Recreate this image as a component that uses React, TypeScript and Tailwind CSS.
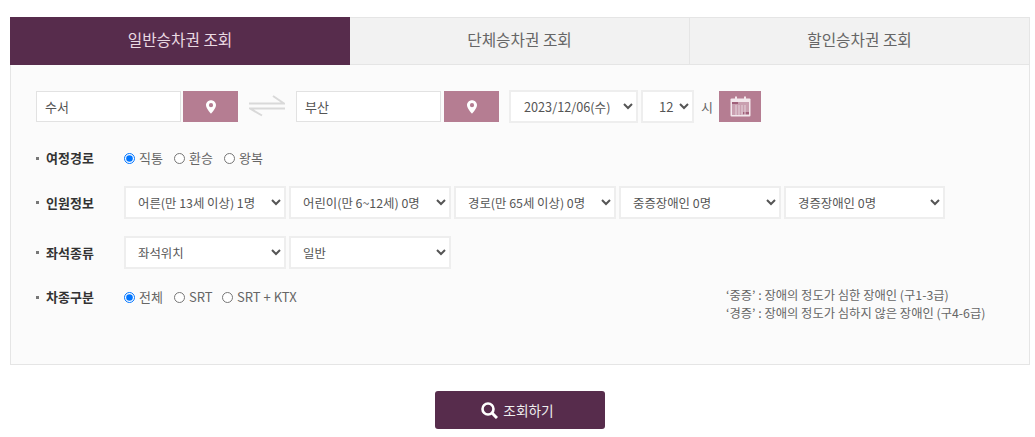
import React from 'react';

const selectClass = "h-[33px] bg-white border-2 border-[#eeeeee] text-[#555555]";
const personClass = `${selectClass} text-[12.4px] pl-[8px] pr-[2px]`;
const inputClass = "w-[145px] h-[31px] bg-white border border-[#e2e2e2] px-[8px] text-[13px] text-[#555555]";
const labelClass = "flex items-center w-[88px] shrink-0 text-[13px] font-bold text-[#333333]";

const PinIcon = () => (
    <svg width="10" height="14" viewBox="0 0 11 15">
        <path fillRule="evenodd" fill="#ffffff" d="M5.5 0C2.4 0 0 2.4 0 5.4c0 3.6 4.2 8 5.5 9.6C6.8 13.4 11 9 11 5.4 11 2.4 8.6 0 5.5 0zm0 3.2a2.3 2.3 0 1 1 0 4.6 2.3 2.3 0 0 1 0-4.6z" />
    </svg>
);

const SwapIcon = () => (
    <svg width="36" height="24" viewBox="0 0 36 24" className="mx-[11px] mb-[3px]">
        <path d="M0 10.5H35L24 3" fill="none" stroke="#d9d9d9" strokeWidth="2" />
        <path d="M36 15.5H1L13 22.5" fill="none" stroke="#d9d9d9" strokeWidth="2" />
    </svg>
);

const CalendarIcon = () => (
    <svg width="21" height="21" viewBox="0 0 21 21">
        <rect x="0.5" y="2.5" width="20" height="18" rx="1" fill="#f3e7ec" />
        <rect x="5" y="0.5" width="2" height="4" fill="#f3e7ec" />
        <rect x="14" y="0.5" width="2" height="4" fill="#f3e7ec" />
        <rect x="2" y="6" width="17" height="13" fill="#c99fb0" />
        <rect x="2" y="6" width="6" height="2" fill="#a0607a" />
        <rect x="13" y="16" width="6" height="2" fill="#a0607a" />
        <path d="M6 9V19M9 9V19M12 9V19M15 9V19" stroke="#e6d3db" strokeWidth="1" />
    </svg>
);

const SearchIcon = () => (
    <svg width="17" height="17" viewBox="0 0 17 17">
        <circle cx="7" cy="7" r="5.5" fill="none" stroke="#ffffff" strokeWidth="2.6" />
        <path d="M11 11L16 16" stroke="#ffffff" strokeWidth="3" />
    </svg>
);

const Label = ({ text }: { text: string }) => (
    <div className={labelClass}>
        <span className="w-[3px] h-[3px] bg-[#777777] mr-[7px]"></span>
        {text}
    </div>
);

const Radio = ({ name, text, checked, className }: { name: string; text: string; checked?: boolean; className: string }) => (
    <label className={`flex items-center text-[13px] text-[#666666] ${className}`}>
        <input type="radio" name={name} defaultChecked={checked} className="w-[11px] h-[11px] mr-[4px]" />
        {text}
    </label>
);

const App: React.FC = () => {
    return (
        <div className="w-[1035px] h-[437px] bg-white overflow-hidden px-[10px] pt-[17px] font-['Noto_Sans_CJK_KR','Noto_Sans',sans-serif]">
            <div className="flex h-[48px] w-[1020px] text-[15.7px]">
                <div className="w-[340px] flex items-center justify-center pb-[2px] bg-[#572c4c] text-[#ead9e2]">일반승차권 조회</div>
                <div className="w-[339px] flex items-center justify-center pb-[2px] bg-[#f2f2f2] text-[#666666] border-y border-[#e5e5e5]">단체승차권 조회</div>
                <div className="flex-1 flex items-center justify-center pb-[2px] bg-[#f2f2f2] text-[#666666] border border-[#e5e5e5]">할인승차권 조회</div>
            </div>
            <div className="w-[1020px] h-[300px] bg-[#fbfbfb] border-x border-b border-[#e5e5e5] pl-[25px] pt-[25px]">
                <div className="flex items-center h-[33px]">
                    <input className={inputClass} defaultValue="수서" readOnly />
                    <button className="w-[55px] h-[31px] ml-[2px] bg-[#b57d92] flex items-center justify-center"><PinIcon /></button>
                    <SwapIcon />
                    <input className={inputClass} defaultValue="부산" readOnly />
                    <button className="w-[55px] h-[31px] ml-[3px] bg-[#b57d92] flex items-center justify-center"><PinIcon /></button>
                    <select className={`${selectClass} w-[129px] ml-[10px] text-[12.7px] pl-[9px] pr-0`} defaultValue="a"><option value="a">2023/12/06(수)</option></select>
                    <select className={`${selectClass} w-[53px] ml-[3px] text-[13px] pl-[12px] pr-0`} defaultValue="a"><option value="a">12</option></select>
                    <span className="text-[13px] text-[#666666] ml-[7px] w-[18px]">시</span>
                    <button className="w-[42px] h-[31px] bg-[#b57d92] flex items-center justify-center"><CalendarIcon /></button>
                </div>
                <div className="flex items-center h-[20px] mt-[25px]">
                    <Label text="여정경로" />
                    <Radio name="route" text="직통" checked className="mr-[10px] w-[40px]" />
                    <Radio name="route" text="환승" className="mr-[10px] w-[40px]" />
                    <Radio name="route" text="왕복" className="w-[40px]" />
                </div>
                <div className="flex items-center h-[33px] mt-[18px]">
                    <Label text="인원정보" />
                    <div className="flex gap-[3px]">
                        <select className={`${personClass} w-[162px]`}><option>어른(만 13세 이상) 1명</option></select>
                        <select className={`${personClass} w-[162px]`}><option>어린이(만 6~12세) 0명</option></select>
                        <select className={`${personClass} w-[162px]`}><option>경로(만 65세 이상) 0명</option></select>
                        <select className={`${personClass} w-[162px]`}><option>중증장애인 0명</option></select>
                        <select className={`${personClass} w-[161px]`}><option>경증장애인 0명</option></select>
                    </div>
                </div>
                <div className="flex items-center h-[33px] mt-[17px]">
                    <Label text="좌석종류" />
                    <div className="flex gap-[3px]">
                        <select className={`${personClass} w-[162px]`}><option>좌석위치</option></select>
                        <select className={`${personClass} w-[162px]`}><option>일반</option></select>
                    </div>
                </div>
                <div className="flex items-start mt-[18px]">
                    <div className="flex items-center h-[20px] w-[690px] shrink-0">
                        <Label text="차종구분" />
                        <Radio name="train" text="전체" checked className="w-[50px]" />
                        <Radio name="train" text="SRT" className="w-[48px]" />
                        <Radio name="train" text="SRT + KTX" className="" />
                    </div>
                    <div className="text-[12.3px] leading-[18px] text-[#666666] mt-[-1px]">
                        <p>‘중증’ : 장애의 정도가 심한 장애인 (구1-3급)</p>
                        <p>‘경증’ : 장애의 정도가 심하지 않은 장애인 (구4-6급)</p>
                    </div>
                </div>
            </div>
            <div className="flex justify-center mt-[26px] w-[1020px]">
                <button className="w-[170px] h-[38px] rounded-[3px] bg-[#572c4c] flex items-center justify-center gap-[5px] text-[13.7px] text-[#eeeeee] pr-[5px]">
                    <SearchIcon />
                    조회하기
                </button>
            </div>
        </div>
    );
};

export default App;
